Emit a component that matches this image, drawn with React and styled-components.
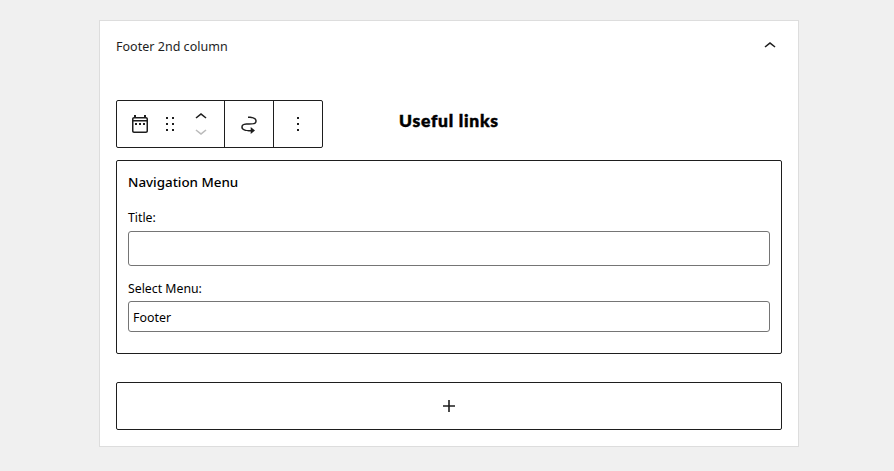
import React from "react";
import styled, { createGlobalStyle } from "styled-components";

const GlobalStyle = createGlobalStyle`
  *, *::before, *::after { box-sizing: border-box; }
  body {
    margin: 0;
    background: #f0f0f0;
    font-family: "Noto Sans", "Open Sans", sans-serif;
    font-size: 13px;
    color: #1e1e1e;
  }
`;

const Page = styled.main`
  height: 471px;
  padding: 20px 95px 0 99px;
  overflow: hidden;
`;

const Panel = styled.section`
  width: 700px;
  height: 427px;
  padding: 0 16px;
  background: #fff;
  border: 1px solid #ddd;
`;

const PanelHeader = styled.header`
  display: flex;
  justify-content: space-between;
  height: 79px;
  padding-top: 13px;
`;

const PanelTitle = styled.h2`
  margin: 0;
  font-size: 12.5px;
  font-weight: 450;
  line-height: 26px;
  letter-spacing: 0.02px;
`;

const Icon = styled.svg`
  display: block;
  flex: none;
  width: 24px;
  height: 24px;
  fill: ${(p) => (p.$muted ? "#bbb" : "#1e1e1e")};
`;

const BlockHeader = styled.div`
  display: flex;
  height: 60px;
`;

const Toolbar = styled.div`
  display: flex;
  width: 207px;
  height: 48px;
  border: 1px solid #1e1e1e;
  border-radius: 2px;
`;

const ToolbarGroup = styled.div`
  display: flex;
  align-items: center;
  justify-content: ${(p) => (p.$start ? "flex-start" : "center")};
  gap: 6px;
  width: ${(p) => p.$width}px;
  padding-left: ${(p) => (p.$start ? 11 : 0)}px;
  border-right: ${(p) => (p.$last ? "none" : "1px solid #1e1e1e")};
`;

const Movers = styled.div`
  display: flex;
  flex-direction: column;
  height: 38px;
  margin-left: 1px;
  justify-content: space-between;

  & > svg { height: 19px; overflow: visible; }
`;

const FooterHeading = styled.h3`
  margin: 9px 0 0 76px;
  color: #000;
  font-family: Lato, sans-serif;
  font-size: 17.5px;
  font-weight: 900;
  line-height: 24px;
  letter-spacing: 0.75px;
  -webkit-text-stroke: 0.5px #000;
  white-space: nowrap;
`;

const WidgetForm = styled.form`
  display: flex;
  flex-direction: column;
  height: 194px;
  padding: 10px 11px 0;
  border: 1px solid #1e1e1e;
  border-radius: 2px;
  color: #000;
`;

const WidgetTitle = styled.h3`
  margin: 0 0 14px;
  font-size: 13.4px;
  font-weight: 540;
  line-height: 22px;
`;

const Label = styled.label`
  height: ${(p) => p.$height}px;
  font-size: 12.3px;
  line-height: 22px;
`;

const Field = styled.div`
  height: ${(p) => p.$height}px;
  margin-bottom: 12px;
  padding: 1px 4px;
  border: 1px solid #757575;
  border-radius: 3px;
  font-size: 12.4px;
  line-height: 29px;
`;

const AddBlock = styled.button`
  display: flex;
  align-items: center;
  justify-content: center;
  width: 100%;
  height: 48px;
  margin-top: 28px;
  padding: 0;
  background: #fff;
  border: 1px solid #1e1e1e;
  border-radius: 2px;
`;

const PATHS = {
  up: "M6.5 12.4L12 8l5.5 4.4-.9 1.2L12 10l-4.5 3.6-1-1.2z",
  down: "M17.5 11.6L12 16l-5.5-4.4.9-1.2L12 14l4.5-3.6 1 1.2z",
  widget:
    "M6 3H8V5H16V3H18V5C19.1046 5 20 5.89543 20 7V19C20 20.1046 19.1046 21 18 21H6C4.89543 21 4 20.1046 4 19V7C4 5.89543 4.89543 5 6 5V3ZM18 6.5H6C5.72386 6.5 5.5 6.72386 5.5 7V8H18.5V7C18.5 6.72386 18.2761 6.5 18 6.5ZM18.5 9.5H5.5V19C5.5 19.2761 5.72386 19.5 6 19.5H18C18.2761 19.5 18.5 19.2761 18.5 19V9.5ZM11 11H13V13H11V11ZM7 11V13H9V11H7ZM15 13V11H17V13H15Z",
  drag: "M8 7h2V5H8v2zm0 6h2v-2H8v2zm0 6h2v-2H8v2zm6-14v2h2V5h-2zm0 8h2v-2h-2v2zm0 6h2v-2h-2v2z",
  move: "M19.75 9c0-1.257-.565-2.197-1.39-2.858-.797-.64-1.827-1.017-2.815-1.247-1.802-.42-3.703-.403-4.383-.396L11 4.5V6l.177-.001c.696-.006 2.416-.02 4.028.356.887.207 1.67.518 2.216.957.52.416.829.945.829 1.688 0 .592-.167.966-.407 1.23-.255.281-.656.508-1.236.674-1.19.34-2.82.346-4.607.346h-.077c-1.692 0-3.527 0-4.942.404-.732.209-1.424.545-1.935 1.108-.526.579-.796 1.33-.796 2.238 0 1.257.565 2.197 1.39 2.858.797.64 1.827 1.017 2.815 1.247 1.802.42 3.703.403 4.383.396L13 19.5h.714V22L18 18.5 13.714 15v3H13l-.177.001c-.696.006-2.416.02-4.028-.356-.887-.207-1.67-.518-2.216-.957-.52-.416-.829-.945-.829-1.688 0-.592.167-.966.407-1.23.255-.281.656-.508 1.237-.674 1.189-.34 2.819-.346 4.606-.346h.077c1.692 0 3.527 0 4.941-.404.732-.209 1.425-.545 1.936-1.108.526-.579.796-1.33.796-2.238z",
  more: "M13 19h-2v-2h2v2zm0-6h-2v-2h2v2zm0-6h-2V5h2v2z",
  plus: "M18 11.2h-5.2V6h-1.6v5.2H6v1.6h5.2V18h1.6v-5.2H18z",
};

function Glyph({ name, muted, box = "0 0 24 24" }) {
  return (
    <Icon viewBox={box} $muted={muted} aria-hidden="true">
      <path d={PATHS[name]} />
    </Icon>
  );
}

export default function App() {
  return (
    <>
      <GlobalStyle />
      <Page>
        <Panel>
          <PanelHeader>
            <PanelTitle>Footer 2nd column</PanelTitle>
            <Glyph name="up" />
          </PanelHeader>
          <BlockHeader>
            <Toolbar>
              <ToolbarGroup $width={108} $start>
                <Glyph name="widget" />
                <Glyph name="drag" />
                <Movers>
                  <Glyph name="up" box="0 0 24 19" />
                  <Glyph name="down" muted box="0 5 24 19" />
                </Movers>
              </ToolbarGroup>
              <ToolbarGroup $width={49}>
                <Glyph name="move" />
              </ToolbarGroup>
              <ToolbarGroup $width={48} $last>
                <Glyph name="more" />
              </ToolbarGroup>
            </Toolbar>
            <FooterHeading>Useful links</FooterHeading>
          </BlockHeader>
          <WidgetForm>
            <WidgetTitle>Navigation Menu</WidgetTitle>
            <Label $height={24}>Title:</Label>
            <Field $height={35} />
            <Label $height={23}>Select Menu:</Label>
            <Field $height={31}>Footer</Field>
          </WidgetForm>
          <AddBlock type="button" aria-label="Add block">
            <Glyph name="plus" />
          </AddBlock>
        </Panel>
      </Page>
    </>
  );
}
